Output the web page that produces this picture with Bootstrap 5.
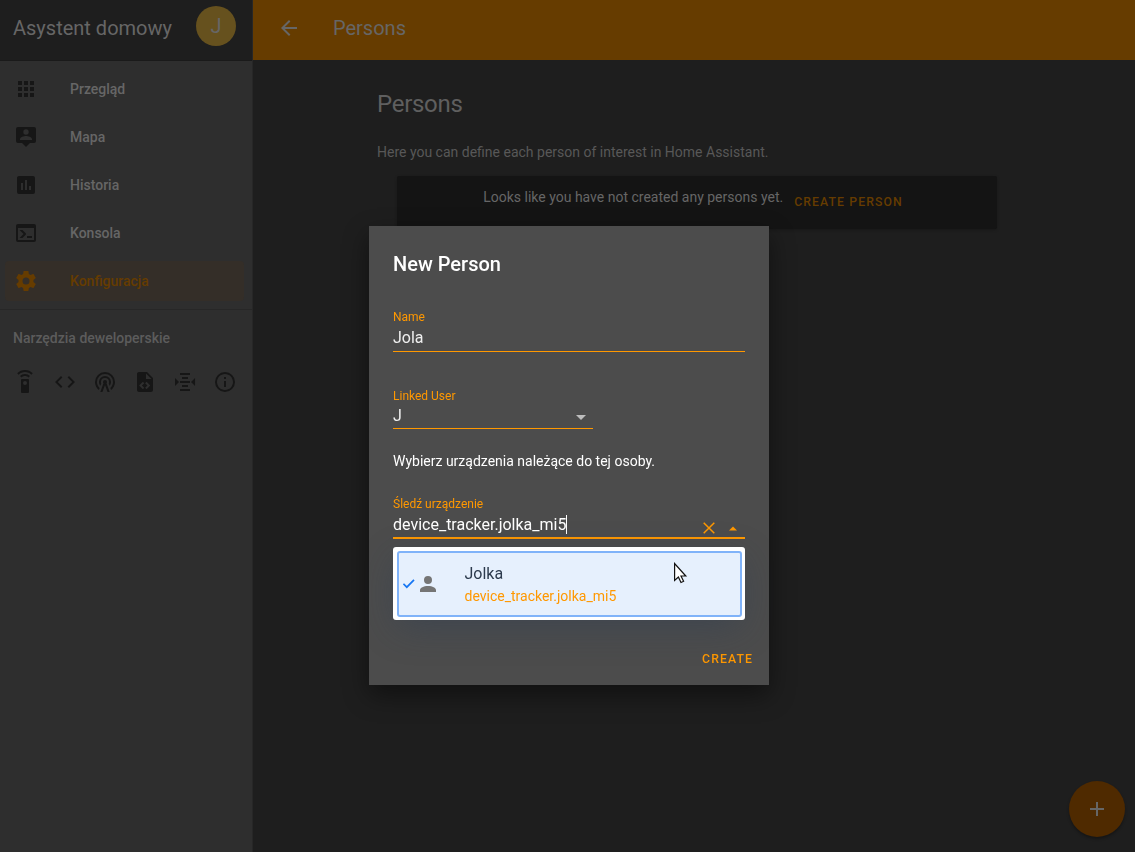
<!DOCTYPE html>
<html lang="pl">
<head>
<meta charset="utf-8">
<meta name="viewport" content="width=device-width, initial-scale=1">
<title>Persons</title>
<link rel="stylesheet" href="https://cdn.jsdelivr.net/npm/bootstrap@5.3.0/dist/css/bootstrap.min.css">
<style>
  :root { --accent: #ff9800; --accent-dim: #663c00; --text-dim: #666; --icon-dim: #161616; }
  body { font-family: Roboto, "Noto Sans", sans-serif; font-size: 14px; line-height: 20px; background: #1e1e1e; color: var(--text-dim); height: 852px; overflow: hidden; }
  svg { display: block; fill: currentColor; flex: none; }
  .side-panel { width: 253px; background: #2e2e2e; border-right: 1px solid #272727; }
  .side-head { height: 61px; background: #1e1e1e; border-bottom: 1px solid #1a1a1a; padding: 0 16px 9px 13px; }
  .bar-title { font-size: 20px; line-height: 24px; }
  .avatar { width: 40px; height: 40px; background: #66511e; font-size: 20px; }
  .side-menu { padding: 8px 8px 8px 5px; gap: 8px; border-bottom: 1px solid #272727; }
  .side-menu .nav-link { height: 40px; padding: 0 9px; gap: 32px; color: var(--text-dim); font-weight: 500; border-radius: 4px; }
  .side-menu .nav-link svg { color: var(--icon-dim); }
  .side-menu .nav-link.active { background: #342e28; color: var(--accent-dim); }
  .side-menu .nav-link.active svg { color: var(--accent-dim); }
  .dev-title { font-weight: 500; padding: 18px 13px 0; color: #5c5c5c; }
  .dev-tools { padding: 22px 13px; gap: 16px; color: var(--icon-dim); }
  .top-bar { height: 60px; background: var(--accent-dim); padding: 0 24px 4px; gap: 32px; }
  .page-body { padding: 28px 0 0 124px; }
  .page-title { font-size: 24px; line-height: 32px; font-weight: 400; letter-spacing: -.288px; margin: 0 0 22px; color: #5f5f5f; }
  .intro { color: #585858; margin-bottom: 14px; }
  .empty-box { width: 600px; height: 53px; margin-left: 20px; background: #141414; border-radius: 2px; padding: 11px 8px 0 0; gap: 11px; box-shadow: 0 1px 3px rgba(0,0,0,.25); }
  .flat-btn { border: 0; background: none; padding: 0; font-weight: 500; font-size: 12.25px; line-height: 20px; letter-spacing: 1.09px; text-transform: uppercase; color: var(--accent); }
  .empty-box .flat-btn { color: var(--accent-dim); margin-top: 5px; }
  .create-btn { margin: 0 -8px -8px 0; }
  .fab { right: 10px; bottom: 15px; width: 56px; height: 56px; background: #4f2a00; color: #666; border: 0; padding: 0; box-shadow: 0 2px 3px rgba(0,0,0,.3); }
  .person-dialog { width: 400px; max-width: 400px; margin: 226px 0 0 369px; }
  .person-dialog .modal-content { height: 459px; border: 0; border-radius: 0; background: #4c4c4c; color: #fff; padding: 24px; box-shadow: 0 10px 24px rgba(0,0,0,.45); }
  .dialog-title { font-size: 20px; line-height: 28px; font-weight: 500; margin: 0 0 29px; }
  .field-label { font-size: 12px; line-height: 21px; height: 19px; color: var(--accent); display: block; }
  .field-box { font-size: 16px; line-height: 24px; border-bottom: 1px solid var(--accent); }
  .name-box { height: 26px; margin-bottom: 34px; color: #eee; }
  .user-box { width: 200px; height: 24px; line-height: 22px; margin-bottom: 22px; color: #eee; }
  .devices-hint { margin-bottom: 23px; }
  .device-box { height: 26px; border-bottom-width: 2px; }
  .caret { width: 1px; height: 19px; background: #fff; margin-top: 2px; }
  .field-icons { color: var(--accent); padding: 9px 7px 0 0; gap: 13px; }
  .suggestions { top: 321px; left: 24px; width: 352px; height: 73px; padding: 4px 3px 3px 4px; background: #fff; border-radius: 3px; box-shadow: 0 10px 36px -4px rgba(40,60,85,.42); }
  .suggestion { height: 66px; background: #e6f0fd; border: 2px solid #80b3f9; border-radius: 3px; color: #2c3a4d; }
  .suggestion-text { margin-left: 25.5px; }
  .suggestion-name { font-size: 16px; line-height: 24px; }
  .suggestion-id { line-height: 20px; color: var(--accent); }
  .pointer { top: 336px; left: 304px; }
</style>
<script src="https://cdn.jsdelivr.net/npm/bootstrap@5.3.0/dist/js/bootstrap.bundle.min.js"></script>
</head>
<body>
<div class="d-flex h-100">
  <aside class="side-panel d-flex flex-column flex-shrink-0">
    <div class="side-head d-flex align-items-center justify-content-between">
      <span class="bar-title mt-1">Asystent domowy</span>
      <span class="avatar rounded-circle d-flex align-items-center justify-content-center">J</span>
    </div>
    <nav class="side-menu nav flex-column">
      <a class="nav-link d-flex align-items-center" href="#"><svg width="24" height="24" viewBox="0 0 24 24"><path d="M16,20H20V16H16M16,14H20V10H16M10,8H14V4H10M16,8H20V4H16M10,14H14V10H10M4,14H8V10H4M4,20H8V16H4M10,20H14V16H10M4,8H8V4H4V8Z"/></svg>Przegląd</a>
      <a class="nav-link d-flex align-items-center" href="#"><svg width="24" height="24" viewBox="0 0 24 24"><path fill-rule="evenodd" d="M20,2A2,2 0 0,1 22,4V16A2,2 0 0,1 20,18H16L12,22L8,18H4A2,2 0 0,1 2,16V4A2,2 0 0,1 4,2H20M12,4.3A2.7,2.7 0 0,0 9.3,7A2.7,2.7 0 0,0 12,9.7A2.7,2.7 0 0,0 14.7,7A2.7,2.7 0 0,0 12,4.3M18,15V14.1C18,12.1 14,11 12,11C10,11 6,12.1 6,14.1V15H18Z"/></svg>Mapa</a>
      <a class="nav-link d-flex align-items-center" href="#"><svg width="24" height="24" viewBox="0 0 24 24"><path fill-rule="evenodd" d="M17,17H15V13H17M13,17H11V7H13M9,17H7V10H9M19,3H5C3.89,3 3,3.89 3,5V19A2,2 0 0,0 5,21H19A2,2 0 0,0 21,19V5C21,3.89 20.1,3 19,3Z"/></svg>Historia</a>
      <a class="nav-link d-flex align-items-center" href="#"><svg width="24" height="24" viewBox="0 0 24 24"><path d="M20,19V7H4V19H20M20,3A2,2 0 0,1 22,5V19A2,2 0 0,1 20,21H4A2,2 0 0,1 2,19V5C2,3.89 2.9,3 4,3H20M13,17V15H18V17H13M9.58,13L5.57,9H8.4L11.7,12.3C12.09,12.69 12.09,13.33 11.7,13.72L8.42,17H5.59L9.58,13Z"/></svg>Konsola</a>
      <a class="nav-link active d-flex align-items-center" href="#"><svg width="24" height="24" viewBox="0 0 24 24"><path d="M12,15.5A3.5,3.5 0 0,1 8.5,12A3.5,3.5 0 0,1 12,8.5A3.5,3.5 0 0,1 15.5,12A3.5,3.5 0 0,1 12,15.5M19.43,12.97C19.47,12.65 19.5,12.33 19.5,12C19.5,11.67 19.47,11.34 19.43,11L21.54,9.37C21.73,9.22 21.78,8.95 21.66,8.73L19.66,5.27C19.54,5.05 19.27,4.96 19.05,5.05L16.56,6.05C16.04,5.66 15.5,5.32 14.87,5.07L14.5,2.42C14.46,2.18 14.25,2 14,2H10C9.75,2 9.54,2.18 9.5,2.42L9.13,5.07C8.5,5.32 7.96,5.66 7.44,6.05L4.95,5.05C4.73,4.96 4.46,5.05 4.34,5.27L2.34,8.73C2.21,8.95 2.27,9.22 2.46,9.37L4.57,11C4.53,11.34 4.5,11.67 4.5,12C4.5,12.33 4.53,12.65 4.57,12.97L2.46,14.63C2.27,14.78 2.21,15.05 2.34,15.27L4.34,18.73C4.46,18.95 4.73,19.03 4.95,18.95L7.44,17.94C7.96,18.34 8.5,18.68 9.13,18.93L9.5,21.58C9.54,21.82 9.75,22 10,22H14C14.25,22 14.46,21.82 14.5,21.58L14.87,18.93C15.5,18.67 16.04,18.34 16.56,17.94L19.05,18.95C19.27,19.03 19.54,18.95 19.66,18.73L21.66,15.27C21.78,15.05 21.73,14.78 21.54,14.63L19.43,12.97Z"/></svg>Konfiguracja</a>
    </nav>
    <div class="dev-title">Narzędzia deweloperskie</div>
    <div class="dev-tools d-flex">
      <svg width="24" height="24" viewBox="0 0 24 24"><path d="M12,0C8.96,0 6.21,1.23 4.22,3.22L5.63,4.63C7.26,3 9.5,2 12,2C14.5,2 16.74,3 18.36,4.64L19.77,3.23C17.79,1.23 15.04,0 12,0M7.05,6.05L8.46,7.46C9.37,6.56 10.62,6 12,6C13.38,6 14.63,6.56 15.54,7.46L16.95,6.05C15.68,4.78 13.93,4 12,4C10.07,4 8.32,4.78 7.05,6.05M12,15A2,2 0 0,1 10,13A2,2 0 0,1 12,11A2,2 0 0,1 14,13A2,2 0 0,1 12,15M15,9H9A1,1 0 0,0 8,10V22A1,1 0 0,0 9,23H15A1,1 0 0,0 16,22V10A1,1 0 0,0 15,9Z"/></svg>
      <svg width="24" height="24" viewBox="0 0 24 24"><path d="M14.6,16.6L19.2,12L14.6,7.4L16,6L22,12L16,18L14.6,16.6M9.4,16.6L4.8,12L9.4,7.4L8,6L2,12L8,18L9.4,16.6Z"/></svg>
      <svg width="24" height="24" viewBox="0 0 24 24"><path d="M12,10A2,2 0 0,1 14,12C14,12.5 13.82,12.94 13.53,13.29L16.7,22H14.57L12,14.93L9.43,22H7.3L10.47,13.29C10.18,12.94 10,12.5 10,12A2,2 0 0,1 12,10M12,8A4,4 0 0,0 8,12C8,12.5 8.1,13 8.28,13.46L7.4,15.86C6.53,14.81 6,13.47 6,12A6,6 0 0,1 12,6A6,6 0 0,1 18,12C18,13.47 17.47,14.81 16.6,15.86L15.72,13.46C15.9,13 16,12.5 16,12A4,4 0 0,0 12,8M12,4A8,8 0 0,0 4,12C4,14.36 5,16.5 6.64,17.94L5.92,19.94C3.54,18.11 2,15.23 2,12A10,10 0 0,1 12,2A10,10 0 0,1 22,12C22,15.23 20.46,18.11 18.08,19.94L17.36,17.94C19,16.5 20,14.36 20,12A8,8 0 0,0 12,4Z"/></svg>
      <svg width="24" height="24" viewBox="0 0 24 24"><path fill-rule="evenodd" d="M13,9H18.5L13,3.5V9M6,2H14L20,8V20A2,2 0 0,1 18,22H6C4.89,22 4,21.1 4,20V4C4,2.89 4.89,2 6,2M6.12,15.5L9.86,19.24L11.28,17.83L8.95,15.5L11.28,13.17L9.86,11.76L6.12,15.5M17.28,15.5L13.54,11.76L12.12,13.17L14.45,15.5L12.12,17.83L13.54,19.24L17.28,15.5Z"/></svg>
      <svg width="24" height="24" viewBox="0 0 24 24"><path d="M7,3V5H17V3H7M9,7V9H15V7H9M2,7.96V16.04L6.03,12L2,7.96M22.03,7.96L18,12L22.03,16.04V7.96M7,11V13H17V11H7M9,15V17H15V15H9M7,19V21H17V19H7Z"/></svg>
      <svg width="24" height="24" viewBox="0 0 24 24"><path d="M11,9H13V7H11M12,20C7.59,20 4,16.41 4,12C4,7.59 7.59,4 12,4C16.41,4 20,7.59 20,12C20,16.41 16.41,20 12,20M12,2A10,10 0 0,0 2,12A10,10 0 0,0 12,22A10,10 0 0,0 22,12A10,10 0 0,0 12,2M11,17H13V11H11V17Z"/></svg>
    </div>
  </aside>
  <main class="flex-grow-1">
    <header class="top-bar d-flex align-items-center">
      <svg width="24" height="24" viewBox="0 0 24 24"><path d="M20,11H7.83L13.42,5.41L12,4L4,12L12,20L13.41,18.59L7.83,13H20V11Z"/></svg>
      <span class="bar-title">Persons</span>
    </header>
    <section class="page-body">
      <h1 class="page-title">Persons</h1>
      <p class="intro">Here you can define each person of interest in Home Assistant.</p>
      <div class="empty-box d-flex align-items-start justify-content-center">
        <span>Looks like you have not created any persons yet.</span>
        <button class="flat-btn">Create person</button>
      </div>
    </section>
  </main>
</div>
<button class="fab position-fixed rounded-circle d-flex align-items-center justify-content-center" aria-label="Add">
  <svg width="24" height="24" viewBox="0 0 24 24"><path d="M19,13H13V19H11V13H5V11H11V5H13V11H19V13Z"/></svg>
</button>

<div class="modal d-block overflow-hidden" tabindex="-1" role="dialog">
  <div class="modal-dialog person-dialog">
    <div class="modal-content">
      <h2 class="dialog-title">New Person</h2>
      <span class="field-label">Name</span>
      <div class="field-box name-box">Jola</div>
      <span class="field-label">Linked User</span>
      <div class="field-box user-box d-flex justify-content-between">
        <span>J</span>
        <svg class="me-1 mt-2" width="16" height="8" viewBox="0 0 16 8"><path fill="#bdbdbd" d="M3,2H13L8,7Z"/></svg>
      </div>
      <p class="devices-hint">Wybierz urządzenia należące do tej osoby.</p>
      <span class="field-label">Śledź urządzenie</span>
      <div class="field-box device-box d-flex justify-content-between">
        <span class="d-flex">device_tracker.jolka_mi5<i class="caret"></i></span>
        <span class="field-icons d-flex">
          <svg width="12" height="12" viewBox="0 0 12 12"><path d="M.7,.7L11.3,11.3M11.3,.7L.7,11.3" fill="none" stroke="currentColor" stroke-width="1.5"/></svg>
          <svg width="10" height="12" viewBox="0 0 10 12"><path d="M1,8.5L5,4.5L9,8.5Z"/></svg>
        </span>
      </div>
      <button class="flat-btn create-btn mt-auto align-self-end">Create</button>
      <div class="suggestions position-absolute">
        <div class="suggestion d-flex align-items-center">
          <svg class="ms-1" width="12" height="12" viewBox="0 0 12 12"><path d="M.4,5.8L3.8,9.2L11,1.8" fill="none" stroke="#1676f3" stroke-width="1.7"/></svg>
          <svg width="24" height="24" viewBox="0 0 24 24"><path fill="#757575" d="M13,4A4,4 0 0,1 17,8A4,4 0 0,1 13,12A4,4 0 0,1 9,8A4,4 0 0,1 13,4M13,14C17.42,14 21,15.79 21,18V20H5V18C5,15.79 8.58,14 13,14Z"/></svg>
          <div class="suggestion-text">
            <div class="suggestion-name">Jolka</div>
            <div class="suggestion-id">device_tracker.jolka_mi5</div>
          </div>
        </div>
      </div>
      <svg class="pointer position-absolute" width="16" height="22" viewBox="0 0 16 22"><path d="M1.6,1.5V18.5L5.4,15L8,20.5L10.6,19.3L8,14H12.8Z" fill="#fff" stroke="#111" stroke-width="1.2"/></svg>
    </div>
  </div>
</div>
</body>
</html>
